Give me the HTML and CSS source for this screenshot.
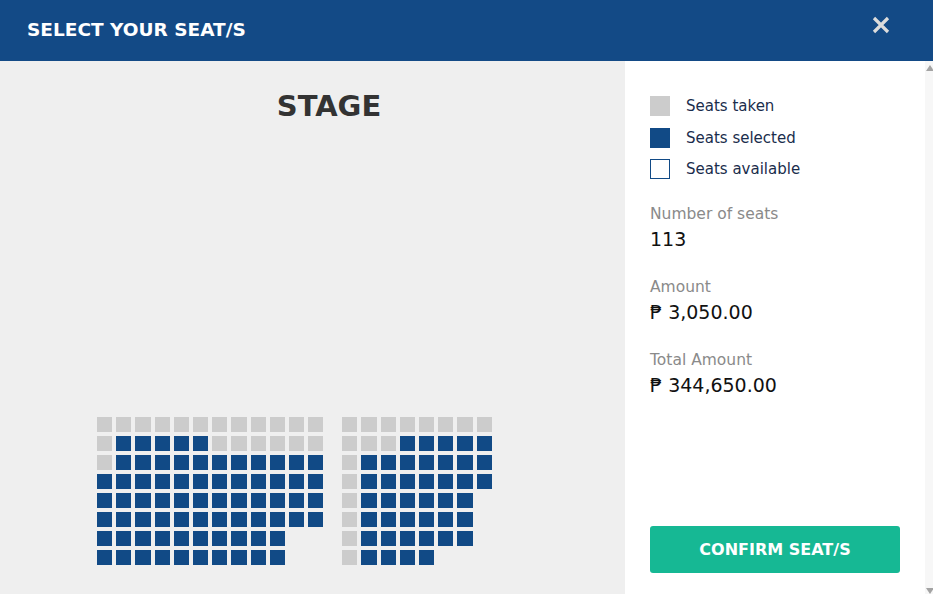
FILE: index.html
```html
<!DOCTYPE html>
<html>
<head>
<meta charset="utf-8">
<link rel="stylesheet" href="styles.css">
</head>
<body>
<div class="modal">
  <header class="header">
    <h1 class="title">SELECT YOUR SEAT/S</h1>
    <button class="close" aria-label="Close">
      <svg width="18" height="18" viewBox="0 0 18 18"><path d="M2 2 L16 16 M16 2 L2 16" stroke="#dcdcdc" stroke-width="3.2" stroke-linecap="butt"/></svg>
    </button>
  </header>
  <div class="content">
    <section class="map">
      <div class="stage">STAGE</div>
      <div class="blocks">
        <div class="block">
          <div class="row"><i class="s t"></i><i class="s t"></i><i class="s t"></i><i class="s t"></i><i class="s t"></i><i class="s t"></i><i class="s t"></i><i class="s t"></i><i class="s t"></i><i class="s t"></i><i class="s t"></i><i class="s t"></i></div>
          <div class="row"><i class="s t"></i><i class="s b"></i><i class="s b"></i><i class="s b"></i><i class="s b"></i><i class="s b"></i><i class="s t"></i><i class="s t"></i><i class="s t"></i><i class="s t"></i><i class="s t"></i><i class="s t"></i></div>
          <div class="row"><i class="s t"></i><i class="s b"></i><i class="s b"></i><i class="s b"></i><i class="s b"></i><i class="s b"></i><i class="s b"></i><i class="s b"></i><i class="s b"></i><i class="s b"></i><i class="s b"></i><i class="s b"></i></div>
          <div class="row"><i class="s b"></i><i class="s b"></i><i class="s b"></i><i class="s b"></i><i class="s b"></i><i class="s b"></i><i class="s b"></i><i class="s b"></i><i class="s b"></i><i class="s b"></i><i class="s b"></i><i class="s b"></i></div>
          <div class="row"><i class="s b"></i><i class="s b"></i><i class="s b"></i><i class="s b"></i><i class="s b"></i><i class="s b"></i><i class="s b"></i><i class="s b"></i><i class="s b"></i><i class="s b"></i><i class="s b"></i><i class="s b"></i></div>
          <div class="row"><i class="s b"></i><i class="s b"></i><i class="s b"></i><i class="s b"></i><i class="s b"></i><i class="s b"></i><i class="s b"></i><i class="s b"></i><i class="s b"></i><i class="s b"></i><i class="s b"></i><i class="s b"></i></div>
          <div class="row"><i class="s b"></i><i class="s b"></i><i class="s b"></i><i class="s b"></i><i class="s b"></i><i class="s b"></i><i class="s b"></i><i class="s b"></i><i class="s b"></i><i class="s b"></i></div>
          <div class="row"><i class="s b"></i><i class="s b"></i><i class="s b"></i><i class="s b"></i><i class="s b"></i><i class="s b"></i><i class="s b"></i><i class="s b"></i><i class="s b"></i><i class="s b"></i></div>
        </div>
        <div class="block">
          <div class="row"><i class="s t"></i><i class="s t"></i><i class="s t"></i><i class="s t"></i><i class="s t"></i><i class="s t"></i><i class="s t"></i><i class="s t"></i></div>
          <div class="row"><i class="s t"></i><i class="s t"></i><i class="s t"></i><i class="s b"></i><i class="s b"></i><i class="s b"></i><i class="s b"></i><i class="s b"></i></div>
          <div class="row"><i class="s t"></i><i class="s b"></i><i class="s b"></i><i class="s b"></i><i class="s b"></i><i class="s b"></i><i class="s b"></i><i class="s b"></i></div>
          <div class="row"><i class="s t"></i><i class="s b"></i><i class="s b"></i><i class="s b"></i><i class="s b"></i><i class="s b"></i><i class="s b"></i><i class="s b"></i></div>
          <div class="row"><i class="s t"></i><i class="s b"></i><i class="s b"></i><i class="s b"></i><i class="s b"></i><i class="s b"></i><i class="s b"></i></div>
          <div class="row"><i class="s t"></i><i class="s b"></i><i class="s b"></i><i class="s b"></i><i class="s b"></i><i class="s b"></i><i class="s b"></i></div>
          <div class="row"><i class="s t"></i><i class="s b"></i><i class="s b"></i><i class="s b"></i><i class="s b"></i><i class="s b"></i><i class="s b"></i></div>
          <div class="row"><i class="s t"></i><i class="s b"></i><i class="s b"></i><i class="s b"></i><i class="s b"></i></div>
        </div>
      </div>
    </section>
    <aside class="side">
      <ul class="legend">
        <li class="legend-item"><span class="swatch sw-taken"></span>Seats taken</li>
        <li class="legend-item"><span class="swatch sw-selected"></span>Seats selected</li>
        <li class="legend-item"><span class="swatch sw-available"></span>Seats available</li>
      </ul>
      <dl class="summary">
        <div class="field"><dt class="label">Number of seats</dt><dd class="value">113</dd></div>
        <div class="field"><dt class="label">Amount</dt><dd class="value">₱ 3,050.00</dd></div>
        <div class="field"><dt class="label">Total Amount</dt><dd class="value">₱ 344,650.00</dd></div>
      </dl>
      <button class="confirm">CONFIRM SEAT/S</button>
    </aside>
    <div class="scrollbar"><span class="arrow-up"></span><span class="arrow-down"></span></div>
  </div>
</div>
</body>
</html>
```
FILE: styles.css
```css
* { box-sizing: border-box; }
html, body { margin: 0; padding: 0; }
body {
  font-family: "DejaVu Sans", "Noto Sans", sans-serif;
  background: #ffffff;
}
.modal {
  width: 933px;
  height: 594px;
  display: flex;
  flex-direction: column;
  overflow: hidden;
}
.header {
  height: 61px;
  flex: none;
  background: #134a86;
  display: flex;
  align-items: center;
  justify-content: space-between;
  padding: 0 43px 3px 27px;
}
.title {
  margin: 0;
  color: #ffffff;
  font-size: 18.5px;
  font-weight: bold;
  letter-spacing: 0;
}
.close {
  border: 0;
  background: transparent;
  padding: 0;
  width: 18px;
  height: 18px;
  display: flex;
  margin-top: -8px;
}
.content {
  flex: 1;
  display: flex;
  min-height: 0;
}
.map {
  width: 625px;
  flex: none;
  background: #efefef;
  display: flex;
  flex-direction: column;
  padding: 28px 0 29px 0;
}
.stage {
  padding-left: 33px;
  text-align: center;
  font-size: 29px;
  font-weight: bold;
  color: #333333;
  line-height: 35px;
}
.blocks {
  margin-top: auto;
  display: flex;
  gap: 19px;
  padding-left: 97px;
}
.block {
  display: flex;
  flex-direction: column;
  gap: 4px;
}
.row {
  display: flex;
  gap: 4px;
}
.s {
  display: block;
  width: 15.2px;
  height: 15px;
}
.s.t { background: #cccccc; }
.s.b { background: #114a86; }
.side {
  flex: 1;
  display: flex;
  flex-direction: column;
  padding: 35px 25px 21px 25px;
}
.legend {
  list-style: none;
  margin: 0;
  padding: 0;
  display: flex;
  flex-direction: column;
  gap: 11.5px;
}
.legend-item {
  display: flex;
  align-items: center;
  height: 20px;
  font-size: 15px;
  color: #1a2d4c;
}
.swatch {
  width: 20px;
  height: 20px;
  margin-right: 16px;
  flex: none;
}
.sw-taken { background: #cccccc; }
.sw-selected { background: #114a86; }
.sw-available { background: #ffffff; border: 1.5px solid #114a86; }
.summary {
  margin: 25px 0 0 0;
  display: flex;
  flex-direction: column;
  gap: 26px;
}
.field {
  display: flex;
  flex-direction: column;
  gap: 3px;
}
.label {
  font-size: 15.5px;
  line-height: 20px;
  color: #8a8a8a;
}
.value {
  margin: 0;
  font-size: 19px;
  line-height: 24px;
  color: #111111;
}
.confirm {
  margin-top: auto;
  height: 47px;
  width: 250px;
  border: 0;
  border-radius: 3px;
  background: #16b894;
  color: #ffffff;
  font-family: "DejaVu Sans", sans-serif;
  font-weight: bold;
  font-size: 16px;
}
.scrollbar {
  width: 8px;
  flex: none;
  background: #f7f7f7;
  display: flex;
  flex-direction: column;
  justify-content: space-between;
  align-items: flex-end;
  padding: 4px 0 0 0;
}
.arrow-up {
  width: 0;
  height: 0;
  border-left: 4px solid transparent;
  border-right: 4px solid transparent;
  border-bottom: 6px solid #a3a3a3;
  margin-right: -1px;
}
.arrow-down {
  width: 0;
  height: 0;
  border-left: 4px solid transparent;
  border-right: 4px solid transparent;
  border-top: 6px solid #a3a3a3;
  margin-right: -1px;
  margin-bottom: 0;
}
```
